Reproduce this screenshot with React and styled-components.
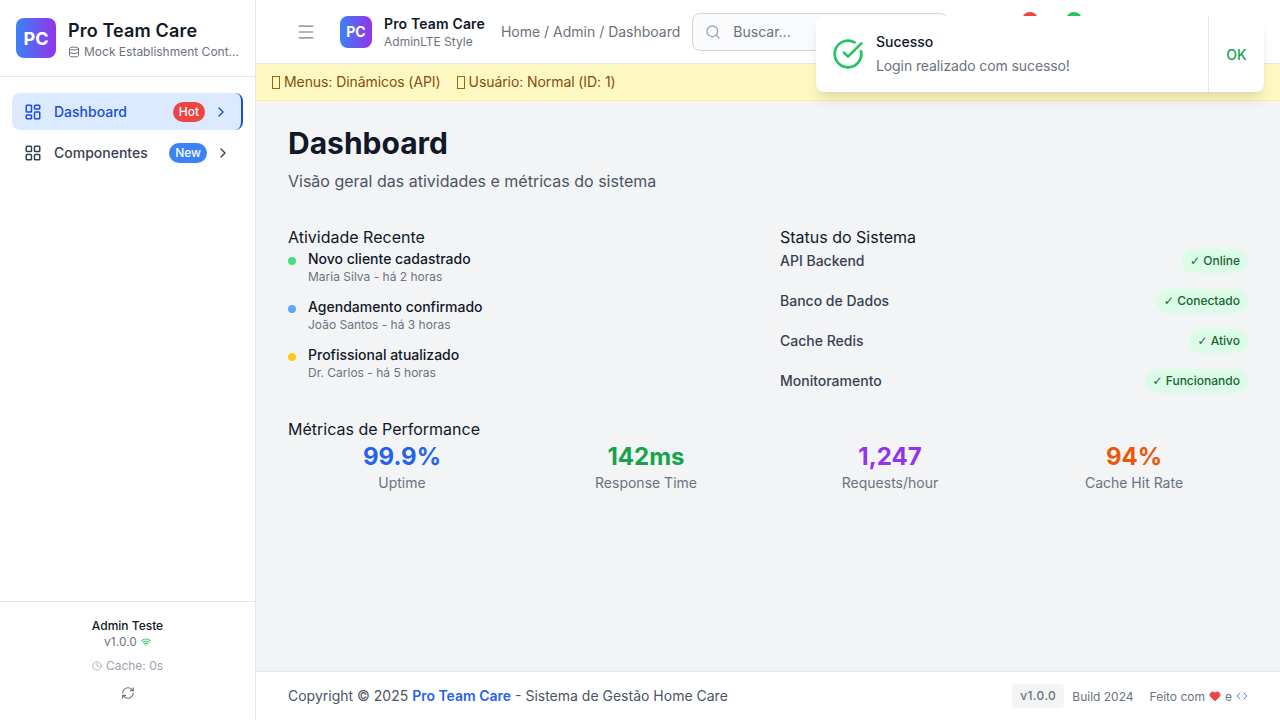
import React from "react";
import styled, { createGlobalStyle } from "styled-components";
import {
  Menu,
  Search,
  Database,
  LayoutGrid,
  LayoutDashboard,
  ChevronRight,
  Wifi,
  Clock,
  RefreshCw,
  Heart,
  Code,
  CircleCheckBig,
} from "lucide-react";

const GlobalStyle = createGlobalStyle`
  * { box-sizing: border-box; }
  body {
    margin: 0;
    font-family: Inter, "Noto Sans", sans-serif;
    color: #111827;
    background: #f3f4f6;
  }
`;

const activities = [
  { color: "#4ade80", title: "Novo cliente cadastrado", sub: "Maria Silva - há 2 horas" },
  { color: "#60a5fa", title: "Agendamento confirmado", sub: "João Santos - há 3 horas" },
  { color: "#facc15", title: "Profissional atualizado", sub: "Dr. Carlos - há 5 horas" },
];

const statuses = [
  { name: "API Backend", label: "Online" },
  { name: "Banco de Dados", label: "Conectado" },
  { name: "Cache Redis", label: "Ativo" },
  { name: "Monitoramento", label: "Funcionando" },
];

const metrics = [
  { value: "99.9%", label: "Uptime", color: "#2563eb" },
  { value: "142ms", label: "Response Time", color: "#16a34a" },
  { value: "1,247", label: "Requests/hour", color: "#9333ea" },
  { value: "94%", label: "Cache Hit Rate", color: "#ea580c" },
];

export default function App() {
  return (
    <Page>
      <GlobalStyle />
      <Sidebar>
        <Brand>
          <LogoBox $size={40} $font={18} $radius={8}>PC</LogoBox>
          <BrandText>
            <BrandTitle>Pro Team Care</BrandTitle>
            <BrandSub>
              <Database size={12} />
              <span>Mock Establishment Cont...</span>
            </BrandSub>
          </BrandText>
        </Brand>
        <Nav>
          <NavItem $active>
            <LayoutDashboard size={18} strokeWidth={2} />
            <NavLabel>Dashboard</NavLabel>
            <Badge $bg="#ef4444">Hot</Badge>
            <ChevronRight size={16} />
          </NavItem>
          <NavItem>
            <LayoutGrid size={18} strokeWidth={2} />
            <NavLabel>Componentes</NavLabel>
            <Badge $bg="#3b82f6">New</Badge>
            <ChevronRight size={16} />
          </NavItem>
        </Nav>
        <SideFooter>
          <UserName>Admin Teste</UserName>
          <Version>
            v1.0.0 <Wifi size={10} color="#22c55e" strokeWidth={2.5} />
          </Version>
          <CacheLine>
            <Clock size={10} /> Cache: 0s
          </CacheLine>
          <RefreshButton>
            <RefreshCw size={14} />
          </RefreshButton>
        </SideFooter>
      </Sidebar>

      <Column>
        <Header>
          <MenuButton>
            <Menu size={20} />
          </MenuButton>
          <LogoBox $size={32} $font={14} $radius={8}>PC</LogoBox>
          <HeaderBrand>
            <HeaderTitle>Pro Team Care</HeaderTitle>
            <HeaderSub>AdminLTE Style</HeaderSub>
          </HeaderBrand>
          <Breadcrumb>Home / Admin / Dashboard</Breadcrumb>
          <SearchBox>
            <Search size={16} color="#9ca3af" />
            <span>Buscar...</span>
          </SearchBox>
          <Dot $bg="#ef4444" $left={1022} />
          <Dot $bg="#22c55e" $left={1066} />
        </Header>

        <Banner>
          <BannerItem><Tofu />Menus: Dinâmicos (API)</BannerItem>
          <BannerItem><Tofu />Usuário: Normal (ID: 1)</BannerItem>
          {/* only the last character peeks out under the toast corner */}
          <BannerEnd>.</BannerEnd>
        </Banner>

        <Main>
          <Title>Dashboard</Title>
          <Subtitle>Visão geral das atividades e métricas do sistema</Subtitle>

          <TwoCols>
            <section>
              <SectionTitle>Atividade Recente</SectionTitle>
              <ActivityList>
                {activities.map((a) => (
                  <ActivityRow key={a.title}>
                    <ActivityDot $color={a.color} />
                    <div>
                      <ActivityTitle>{a.title}</ActivityTitle>
                      <ActivitySub>{a.sub}</ActivitySub>
                    </div>
                  </ActivityRow>
                ))}
              </ActivityList>
            </section>
            <section>
              <SectionTitle>Status do Sistema</SectionTitle>
              <StatusList>
                {statuses.map((s) => (
                  <StatusRow key={s.name}>
                    <StatusName>{s.name}</StatusName>
                    <StatusPill><CheckMark>✓</CheckMark> {s.label}</StatusPill>
                  </StatusRow>
                ))}
              </StatusList>
            </section>
          </TwoCols>

          <MetricsSection>
            <SectionTitle>Métricas de Performance</SectionTitle>
            <MetricsGrid>
              {metrics.map((m) => (
                <Metric key={m.label}>
                  <MetricValue $color={m.color}>{m.value}</MetricValue>
                  <MetricLabel>{m.label}</MetricLabel>
                </Metric>
              ))}
            </MetricsGrid>
          </MetricsSection>
        </Main>

        <Footer>
          <Copyright>
            Copyright © 2025 <strong>Pro Team Care</strong> - Sistema de Gestão Home Care
          </Copyright>
          <FooterRight>
            <VersionTag>v1.0.0</VersionTag>
            <span>Build 2024</span>
            <MadeWith>
              Feito com <Heart size={12} color="#ef4444" fill="#ef4444" /> e{" "}
              <Code size={12} color="#3b82f6" />
            </MadeWith>
          </FooterRight>
        </Footer>
      </Column>

      <Toast>
        <ToastBody>
          <CircleCheckBig size={32} color="#22c55e" strokeWidth={2} />
          <ToastText>
            <ToastTitle>Sucesso</ToastTitle>
            <ToastMessage>Login realizado com sucesso!</ToastMessage>
          </ToastText>
        </ToastBody>
        <ToastAction>OK</ToastAction>
      </Toast>
    </Page>
  );
}

const Page = styled.div`
  display: flex;
  width: 1280px;
  height: 720px;
  overflow: hidden;
  position: relative;
`;

const Sidebar = styled.aside`
  width: 256px;
  flex-shrink: 0;
  display: flex;
  flex-direction: column;
  background: #fff;
  border-right: 1px solid #e5e7eb;
`;

const Brand = styled.div`
  display: flex;
  align-items: center;
  gap: 12px;
  height: 77px;
  padding: 0 16px;
  border-bottom: 1px solid #e5e7eb;
`;

const LogoBox = styled.div`
  width: ${(p) => p.$size}px;
  height: ${(p) => p.$size}px;
  flex-shrink: 0;
  display: flex;
  align-items: center;
  justify-content: center;
  border-radius: ${(p) => p.$radius}px;
  background: linear-gradient(to right, #3b82f6, #9333ea);
  color: #fff;
  font-size: ${(p) => p.$font}px;
  font-weight: 700;
`;

const BrandText = styled.div`
  min-width: 0;
`;

const BrandTitle = styled.div`
  font-size: 18px;
  line-height: 30px;
  margin-bottom: -2px;
  font-weight: 600;
  letter-spacing: 0.15px;
`;

const BrandSub = styled.div`
  display: flex;
  align-items: center;
  gap: 4px;
  font-size: 12px;
  line-height: 16px;
  color: #6b7280;
  white-space: nowrap;
`;

const Nav = styled.nav`
  flex: 1;
  display: flex;
  flex-direction: column;
  gap: 4px;
  padding: 16px 12px;
`;

const NavItem = styled.div`
  display: flex;
  align-items: center;
  height: 37px;
  padding: 0 12px;
  border-radius: 8px;
  font-size: 14px;
  font-weight: 500;
  color: ${(p) => (p.$active ? "#1d4ed8" : "#374151")};
  background: ${(p) => (p.$active ? "#dbeafe" : "transparent")};
  border-right: ${(p) => (p.$active ? "2px solid #1d4ed8" : "none")};
`;

const NavLabel = styled.span`
  flex: 1;
  margin-left: 12px;
`;

const Badge = styled.span`
  padding: 2px 6px;
  border-radius: 999px;
  background: ${(p) => p.$bg};
  color: #fff;
  font-size: 12px;
  line-height: 16px;
  font-weight: 500;
  margin-right: 8px;
`;

const SideFooter = styled.div`
  height: 119px;
  padding-top: 16px;
  border-top: 1px solid #e5e7eb;
  display: flex;
  flex-direction: column;
  align-items: center;
  text-align: center;
`;

const UserName = styled.div`
  font-size: 12px;
  line-height: 16px;
  font-weight: 500;
`;

const Version = styled.div`
  display: flex;
  align-items: center;
  gap: 4px;
  font-size: 12px;
  line-height: 16px;
  color: #6b7280;
`;

const CacheLine = styled.div`
  display: flex;
  align-items: center;
  gap: 4px;
  margin-top: 8px;
  font-size: 12px;
  line-height: 16px;
  color: #9ca3af;
`;

const RefreshButton = styled.div`
  display: flex;
  margin-top: 12px;
  color: #6b7280;
`;

const Column = styled.div`
  flex: 1;
  min-width: 0;
  display: flex;
  flex-direction: column;
`;

const Header = styled.header`
  position: relative;
  height: 64px;
  flex-shrink: 0;
  display: flex;
  align-items: center;
  padding: 0 0 0 40px;
  background: #fff;
  border-bottom: 1px solid #e5e7eb;
`;

const MenuButton = styled.div`
  display: flex;
  color: #9ca3af;
  margin-right: 24px;
`;

const HeaderBrand = styled.div`
  margin-left: 12px;
`;

const HeaderTitle = styled.div`
  font-size: 14px;
  line-height: 20px;
  font-weight: 600;
  letter-spacing: 0.15px;
`;

const HeaderSub = styled.div`
  font-size: 12px;
  line-height: 16px;
  color: #6b7280;
`;

const Breadcrumb = styled.div`
  margin-left: 16px;
  font-size: 14px;
  color: #6b7280;
  white-space: nowrap;
`;

const SearchBox = styled.div`
  display: flex;
  align-items: center;
  gap: 12px;
  width: 256px;
  height: 38px;
  margin-left: 12px;
  padding: 0 12px;
  border: 1px solid #d1d5db;
  border-radius: 8px;
  background: #f9fafb;
  font-size: 14px;
  color: #6b7280;
`;

const Dot = styled.span`
  position: absolute;
  top: 12px;
  left: ${(p) => p.$left - 256}px;
  width: 16px;
  height: 16px;
  border-radius: 50%;
  background: ${(p) => p.$bg};
`;

const Banner = styled.div`
  height: 37px;
  flex-shrink: 0;
  display: flex;
  align-items: center;
  gap: 16px;
  padding: 0 16px 1px;
  background: #fef9c3;
  border-bottom: 1px solid #fef08a;
  font-size: 14px;
  color: #854d0e;
`;

const BannerItem = styled.span`
  display: flex;
  align-items: center;
  letter-spacing: -0.08px;
`;

// the reference shows a missing-glyph box where the emoji would be
const Tofu = styled.i`
  width: 8px;
  height: 13px;
  margin: 2px 4px 0 0;
  border: 1px solid #a16207;
`;

const BannerEnd = styled.span`
  margin-left: auto;
  color: #111827;
`;

const Main = styled.main`
  flex: 1;
  padding: 24px 32px;
`;

const Title = styled.h1`
  margin: 0;
  font-size: 30px;
  line-height: 36px;
  font-weight: 700;
`;

const Subtitle = styled.p`
  margin: 8px 0 0;
  font-size: 16px;
  line-height: 24px;
  color: #4b5563;
`;

const TwoCols = styled.div`
  display: grid;
  grid-template-columns: 1fr 1fr;
  gap: 24px;
  margin-top: 32px;
`;

const SectionTitle = styled.h3`
  margin: 0;
  font-size: 16px;
  line-height: 24px;
  font-weight: 400;
  color: #111827;
`;

const ActivityList = styled.div`
  display: flex;
  flex-direction: column;
  gap: 12px;
`;

const ActivityRow = styled.div`
  display: flex;
  align-items: flex-start;
  gap: 12px;
`;

const ActivityDot = styled.span`
  width: 8px;
  height: 8px;
  margin-top: 8px;
  border-radius: 50%;
  background: ${(p) => p.$color};
`;

const ActivityTitle = styled.div`
  font-size: 14px;
  line-height: 20px;
  font-weight: 500;
`;

const ActivitySub = styled.div`
  font-size: 12px;
  line-height: 16px;
  color: #6b7280;
`;

const StatusList = styled.div`
  display: flex;
  flex-direction: column;
  gap: 16px;
`;

const StatusRow = styled.div`
  display: flex;
  align-items: center;
  justify-content: space-between;
  height: 24px;
`;

const StatusName = styled.span`
  font-size: 14px;
  line-height: 20px;
  font-weight: 500;
  color: #374151;
`;

const StatusPill = styled.span`
  padding: 4px 8px;
  border-radius: 999px;
  background: #dcfce7;
  color: #166534;
  font-size: 12px;
  line-height: 16px;
  font-weight: 500;
`;

const CheckMark = styled.span`
  font-family: "DejaVu Sans", sans-serif;
  font-weight: 400;
`;

const MetricsSection = styled.section`
  margin-top: 24px;
`;

const MetricsGrid = styled.div`
  display: grid;
  grid-template-columns: repeat(4, 1fr);
  gap: 16px;
`;

const Metric = styled.div`
  text-align: center;
`;

const MetricValue = styled.div`
  font-size: 24px;
  line-height: 32px;
  font-weight: 700;
  color: ${(p) => p.$color};
`;

const MetricLabel = styled.div`
  font-size: 14px;
  line-height: 20px;
  color: #6b7280;
`;

const Footer = styled.footer`
  height: 49px;
  flex-shrink: 0;
  display: flex;
  align-items: center;
  justify-content: space-between;
  padding: 0 32px;
  background: #fff;
  border-top: 1px solid #e5e7eb;
`;

const Copyright = styled.div`
  font-size: 14px;
  line-height: 20px;
  color: #4b5563;

  strong {
    font-weight: 600;
    color: #2563eb;
  }
`;

const FooterRight = styled.div`
  display: flex;
  align-items: center;
  gap: 8px;
  font-size: 12px;
  color: #6b7280;
`;

const VersionTag = styled.span`
  padding: 4px 8px;
  border-radius: 4px;
  background: #f3f4f6;
  font-weight: 500;
  line-height: 16px;
  letter-spacing: 0.4px;
`;

const MadeWith = styled.span`
  display: flex;
  align-items: center;
  gap: 4px;
  margin-left: 8px;
`;

const Toast = styled.div`
  position: absolute;
  top: 16px;
  right: 16px;
  width: 448px;
  height: 76px;
  display: flex;
  background: #fff;
  border-radius: 8px;
  box-shadow: 0 10px 15px -3px rgba(0, 0, 0, 0.1), 0 4px 6px -4px rgba(0, 0, 0, 0.1);
`;

const ToastBody = styled.div`
  flex: 1;
  display: flex;
  align-items: center;
  gap: 12px;
  padding: 0 16px;
`;

const ToastText = styled.div`
  display: flex;
  flex-direction: column;
  gap: 4px;
`;

const ToastTitle = styled.div`
  font-size: 14px;
  line-height: 20px;
  font-weight: 500;
`;

const ToastMessage = styled.div`
  font-size: 14px;
  line-height: 20px;
  color: #6b7280;
  letter-spacing: -0.1px;
`;

const ToastAction = styled.div`
  width: 56px;
  display: flex;
  align-items: center;
  justify-content: center;
  border-left: 1px solid #e5e7eb;
  font-size: 14px;
  font-weight: 500;
  color: #16a34a;
`;
